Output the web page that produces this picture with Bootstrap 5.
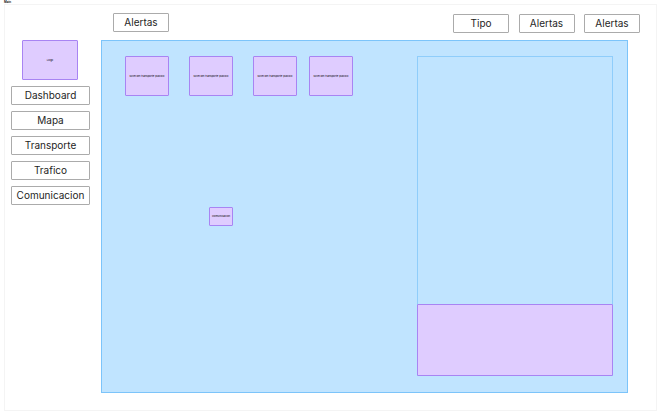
<!DOCTYPE html>
<html lang="es">
<head>
<meta charset="utf-8">
<title>Wireframe</title>
<link rel="stylesheet" href="https://cdn.jsdelivr.net/npm/bootstrap@5.3.0/dist/css/bootstrap.min.css">
<style>
html,body{height:416px;overflow:hidden}
body{background:#fff;font-family:Inter,"Liberation Sans",sans-serif;color:#1e1e1e;position:relative}
.page-tag{position:absolute;left:4px;top:0;font-size:3px;line-height:4px;color:#000;font-weight:600}
.wf-frame{margin:4px 0 0 4px;width:653px;height:407px;border:1px solid #f4f4f4;background:#fff;padding:8px 0 0 6px}
.wf-side{width:79px;padding-top:27px;margin-right:11px}
.wf-logo{width:56px;height:40px;margin:0 0 0 11px}
.wf-box{background:#dfccff;border:1px solid #a884f3;border-radius:1px;font-size:2.7px;line-height:1;color:#000}
.wf-btn{background:#fff;border:1px solid #ababab;border-radius:1px;color:#1e1e1e;font-size:10px;line-height:1;padding:0 0 1px}
.wf-nav{width:79px;height:19px}
.wf-top{height:19px;margin-bottom:8px;padding-left:12px;padding-right:16px}
.wf-act{width:56px;height:19px}
.wf-right{margin-left:auto;padding-top:.5px}
.wf-canvas{position:relative;width:527px;height:353px;background:#c0e4ff;border:1px solid #7cc4fa}
.wf-node{position:absolute;top:15px;width:44px;height:40px}
.wf-n1{left:23px}.wf-n2{left:87px}.wf-n3{left:151px}.wf-n4{left:207px}
.wf-comm{position:absolute;left:107px;top:166px;width:24px;height:19px}
.wf-panel{position:absolute;left:315px;top:15px;width:196px;height:320px;border:1px solid #8fcdfb}
.wf-panel-foot{height:72px;margin:0 -1px -1px}
.wf-gap{gap:6px}
.wf-gap-top{gap:9.5px}
</style>
</head>
<body>
<div class="page-tag">Main</div>
<div class="wf-frame d-flex">
  <aside class="wf-side flex-shrink-0 d-flex flex-column wf-gap">
    <div class="wf-box wf-logo d-flex align-items-center justify-content-center">Logo</div>
    <button class="wf-btn wf-nav" type="button">Dashboard</button>
    <button class="wf-btn wf-nav" type="button">Mapa</button>
    <button class="wf-btn wf-nav" type="button">Transporte</button>
    <button class="wf-btn wf-nav" type="button">Trafico</button>
    <button class="wf-btn wf-nav" type="button">Comunicacion</button>
  </aside>
  <main class="flex-grow-1 d-flex flex-column">
    <div class="wf-top d-flex align-items-start">
      <button class="wf-btn wf-act" type="button">Alertas</button>
      <div class="wf-right d-flex wf-gap-top">
        <button class="wf-btn wf-act" type="button">Tipo</button>
        <button class="wf-btn wf-act" type="button">Alertas</button>
        <button class="wf-btn wf-act" type="button">Alertas</button>
      </div>
    </div>
    <div class="wf-canvas">
      <div class="wf-box wf-node wf-n1 d-flex align-items-center justify-content-center text-center">Nivel del transporte publico</div>
      <div class="wf-box wf-node wf-n2 d-flex align-items-center justify-content-center text-center">Nivel del transporte publico</div>
      <div class="wf-box wf-node wf-n3 d-flex align-items-center justify-content-center text-center">Nivel del transporte publico</div>
      <div class="wf-box wf-node wf-n4 d-flex align-items-center justify-content-center text-center">Nivel del transporte publico</div>
      <div class="wf-box wf-comm d-flex align-items-center justify-content-center">Comunicacion</div>
      <div class="wf-panel d-flex flex-column justify-content-end">
        <div class="wf-box wf-panel-foot"></div>
      </div>
    </div>
  </main>
</div>
<script src="https://cdn.jsdelivr.net/npm/bootstrap@5.3.0/dist/js/bootstrap.bundle.min.js"></script>
</body>
</html>
